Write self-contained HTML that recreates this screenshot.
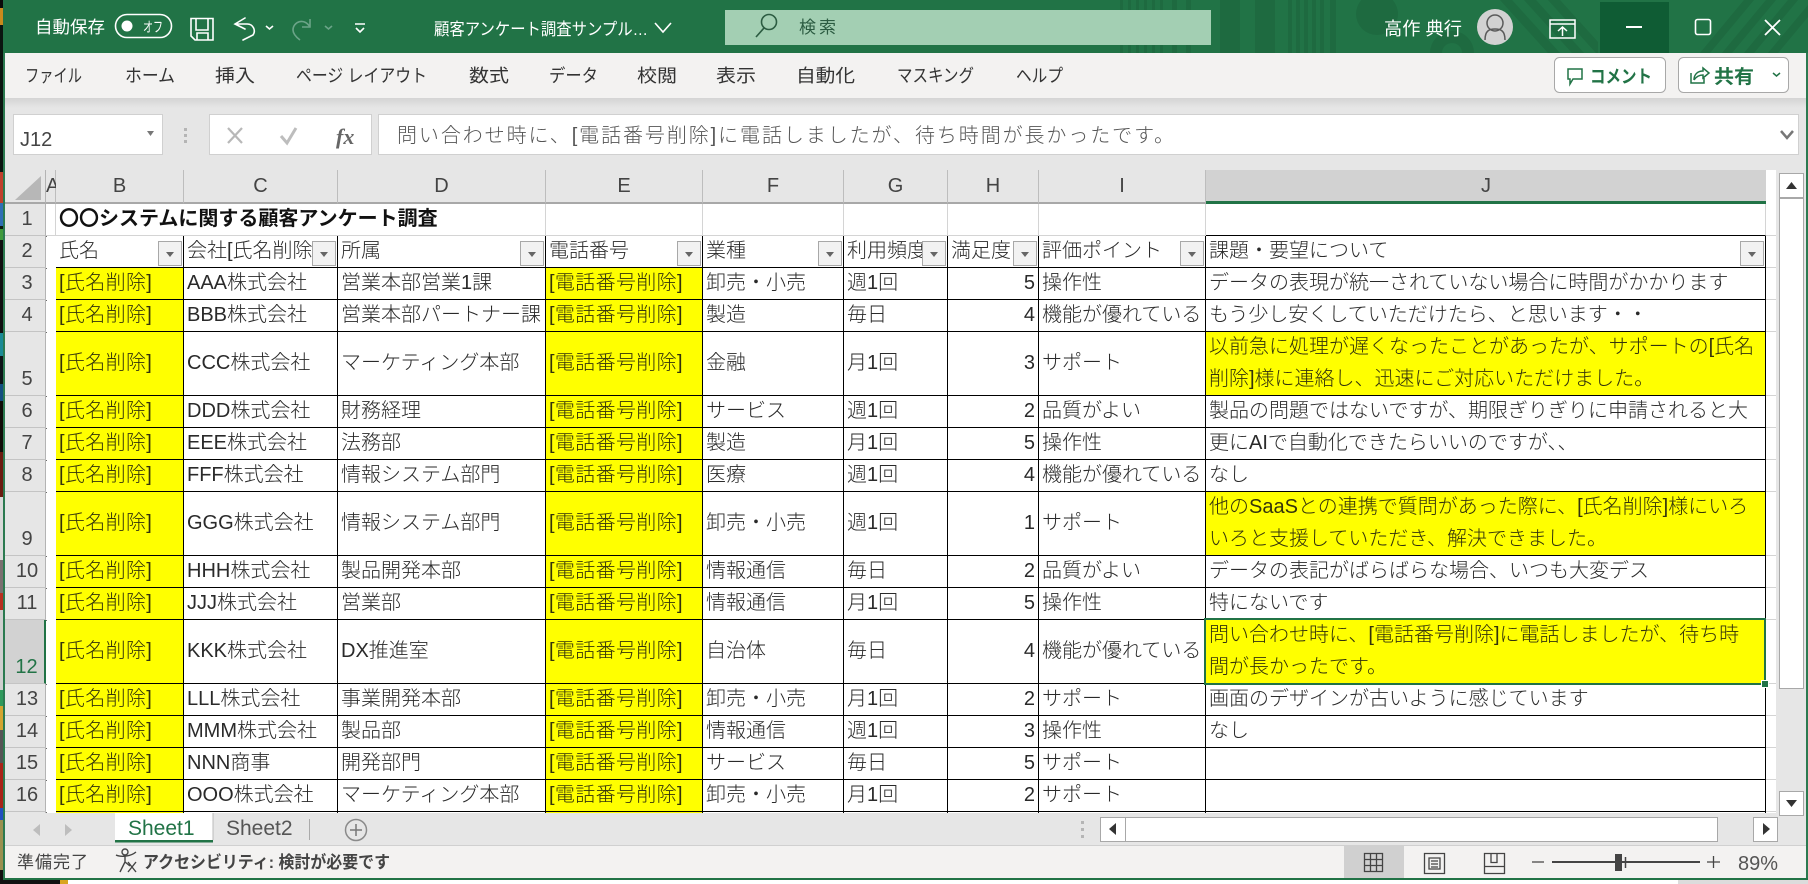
<!DOCTYPE html>
<html lang="ja"><head><meta charset="utf-8"><title>顧客アンケート調査</title>
<style>
html,body{margin:0;padding:0;background:#fff}
body{width:1808px;height:884px;position:relative;overflow:hidden;font-family:"Liberation Sans","Noto Sans CJK JP",sans-serif;color:#2a2a2a}
.a{position:absolute}
#strip{left:0;top:0;width:3px;height:884px;background:linear-gradient(#0a0a0a 0 8px,#c98a1c 8px 25px,#0b1510 25px 172px,#c0402c 172px 203px,#2f6fb5 203px 226px,#0c1a10 226px 229px,#3f9a3c 229px 240px,#101010 240px 333px,#1b8a96 333px 356px,#0d1418 356px 384px,#134f80 384px 401px,#100c08 401px 452px,#6a1c10 452px 497px,#d9d9d9 497px 560px,#7a7070 560px 593px,#b83020 593px 610px,#cfcfcf 610px 690px,#2f9a5c 690px 706px,#d2a530 706px 730px,#555 730px 763px,#a82418 763px 808px,#2050c0 808px 820px,#9a9050 820px 870px,#111 870px)}
#edge{left:3px;top:0;width:2px;height:880px;background:#2b7a50}
#edger{left:1806px;top:0;width:2px;height:880px;background:#2b7a50}
#title{left:3px;top:0;width:1805px;height:53px;background:#217346}
#rib{left:5px;top:53px;width:1801px;height:45px;background:#f3f2f1}
#fbar{left:5px;top:98px;width:1801px;height:72px;background:linear-gradient(#d4d4d4,#e6e6e6 10px)}
.box{background:#fff;border:1px solid #d0d0d0;box-sizing:border-box}
#wrap{left:5px;top:170px;width:1771px;height:643px;overflow:hidden;background:#fff}
#side{left:1776px;top:170px;width:30px;height:643px;background:#e6e6e6}
table{border-collapse:separate;border-spacing:0;table-layout:fixed;width:1771px;font-size:20px;line-height:31px;font-weight:300}
td,th{padding:0 3px 0 3px;white-space:nowrap;overflow:hidden;box-sizing:border-box;border-right:1px solid #000;border-bottom:1px solid #000;vertical-align:middle;position:relative;font-weight:300;text-align:left}
thead th{background:#e6e6e6;border-right:1px solid #bdbdbd;border-bottom:2px solid #a8a8a8;text-align:center;color:#444;padding:0;height:34px;line-height:30px}
thead th.j{background:#d2d2d2;border-bottom:3px solid #217346;border-right:0}
td.r,thead th.c{background:#e6e6e6;border-right:1px solid #b4b4b4;border-bottom:1px solid #c4c4c4;text-align:center;color:#444;padding:0 0 0 4px;vertical-align:bottom;line-height:31px}
td.s{background:#d2d2d2;color:#217346;border-right:2px solid #217346}
td.g{border-right:1px solid #d4d4d4;border-bottom:1px solid #d4d4d4;padding:0}
td.a{border-bottom:1px solid #d4d4d4;padding:0}
td.k{border-right:0;border-bottom:1px solid #d4d4d4;padding:0}
td.y{background:#ff0;color:#33330c;letter-spacing:.35px}
td.w{line-height:31.5px;letter-spacing:0}
td.n{text-align:right;padding-right:3px}
tr.t td.c{border-bottom:1px solid #d4d4d4}
.f{position:absolute;right:1px;top:5px;width:24px;height:25px;box-sizing:border-box;background:#f2f2f2;border:1px solid #a8a8a8}
.f:after{content:"";position:absolute;left:7px;top:10px;border:4.5px solid transparent;border-top:5px solid #666;border-bottom:0}
#sel{left:1204px;top:618px;width:562px;height:67px;box-sizing:border-box;border:2.5px solid #217346}
#hd{left:1761px;top:680px;width:6px;height:6px;background:#217346;border:1px solid #fff}
#tabs{left:5px;top:813px;width:1801px;height:32px;background:#e6e6e6}
#st{left:5px;top:845px;width:1801px;height:33px;background:#f3f2f1;border-top:1px solid #d0d0d0;box-sizing:border-box}
#grn{left:3px;top:878px;width:1805px;height:2px;background:#217346}
#bot{left:0;top:880px;width:1808px;height:4px;background:#fff;overflow:hidden}
svg{position:absolute;left:0;top:0}
svg text{font-family:"Liberation Sans","Noto Sans CJK JP",sans-serif}
</style></head><body>
<div class="a" id="strip"></div><div class="a" id="edge"></div><div class="a" id="edger"></div>
<div class="a" id="title"></div><div class="a" id="rib"></div><div class="a" id="fbar"></div>
<div class="a box" style="left:13px;top:114px;width:150px;height:41px"></div>
<div class="a box" style="left:209px;top:114px;width:163px;height:41px"></div>
<div class="a box" style="left:378px;top:114px;width:1421px;height:41px"></div>
<div class="a" id="wrap">
<table>
<colgroup><col style="width:41px"><col style="width:10px"><col style="width:128px"><col style="width:154px"><col style="width:208px"><col style="width:157px"><col style="width:141px"><col style="width:104px"><col style="width:91px"><col style="width:167px"><col style="width:560px"><col style="width:10px"></colgroup>
<thead><tr><th class="c" style="border-bottom:2px solid #a8a8a8"></th><th style="overflow:visible">A</th><th>B</th><th>C</th><th>D</th><th>E</th><th>F</th><th>G</th><th>H</th><th>I</th><th class="j">J</th><th style="background:#fff;border:0"></th></tr></thead>
<tbody>
<tr class="t" style="height:32px"><td class="r">1</td><td class="g"></td><td class="c" style="overflow:visible;border-right:0;font-weight:700;color:#111">〇〇システムに関する顧客アンケート調査</td><td class="g" style="border-right:0"></td><td class="g"></td><td class="g"></td><td class="g"></td><td class="g"></td><td class="g"></td><td class="g"></td><td class="g" style="border-bottom:1px solid #000"></td><td class="k"></td></tr>
<tr style="height:32px"><td class="r">2</td><td class="a"></td><td>氏名<i class="f"></i></td><td>会社[氏名削除<i class="f"></i></td><td>所属<i class="f"></i></td><td>電話番号<i class="f"></i></td><td>業種<i class="f"></i></td><td>利用頻度<i class="f"></i></td><td>満足度<i class="f"></i></td><td>評価ポイント<i class="f"></i></td><td>課題・要望について<i class="f"></i></td><td class="k"></td></tr>
<tr style="height:32px"><td class="r">3</td><td class="a"></td><td class="y">[氏名削除]</td><td>AAA株式会社</td><td>営業本部営業1課</td><td class="y">[電話番号削除]</td><td>卸売・小売</td><td>週1回</td><td class="n">5</td><td>操作性</td><td>データの表現が統一されていない場合に時間がかかります</td><td class="k"></td></tr>
<tr style="height:32px"><td class="r">4</td><td class="a"></td><td class="y">[氏名削除]</td><td>BBB株式会社</td><td>営業本部パートナー課</td><td class="y">[電話番号削除]</td><td>製造</td><td>毎日</td><td class="n">4</td><td>機能が優れている</td><td>もう少し安くしていただけたら、と思います・・</td><td class="k"></td></tr>
<tr style="height:64px"><td class="r">5</td><td class="a"></td><td class="y">[氏名削除]</td><td>CCC株式会社</td><td>マーケティング本部</td><td class="y">[電話番号削除]</td><td>金融</td><td>月1回</td><td class="n">3</td><td>サポート</td><td class="y w">以前急に処理が遅くなったことがあったが、サポートの[氏名<br>削除]様に連絡し、迅速にご対応いただけました。</td><td class="k"></td></tr>
<tr style="height:32px"><td class="r">6</td><td class="a"></td><td class="y">[氏名削除]</td><td>DDD株式会社</td><td>財務経理</td><td class="y">[電話番号削除]</td><td>サービス</td><td>週1回</td><td class="n">2</td><td>品質がよい</td><td>製品の問題ではないですが、期限ぎりぎりに申請されると大</td><td class="k"></td></tr>
<tr style="height:32px"><td class="r">7</td><td class="a"></td><td class="y">[氏名削除]</td><td>EEE株式会社</td><td>法務部</td><td class="y">[電話番号削除]</td><td>製造</td><td>月1回</td><td class="n">5</td><td>操作性</td><td>更にAIで自動化できたらいいのですが、、</td><td class="k"></td></tr>
<tr style="height:32px"><td class="r">8</td><td class="a"></td><td class="y">[氏名削除]</td><td>FFF株式会社</td><td>情報システム部門</td><td class="y">[電話番号削除]</td><td>医療</td><td>週1回</td><td class="n">4</td><td>機能が優れている</td><td>なし</td><td class="k"></td></tr>
<tr style="height:64px"><td class="r">9</td><td class="a"></td><td class="y">[氏名削除]</td><td>GGG株式会社</td><td>情報システム部門</td><td class="y">[電話番号削除]</td><td>卸売・小売</td><td>週1回</td><td class="n">1</td><td>サポート</td><td class="y w">他のSaaSとの連携で質問があった際に、[氏名削除]様にいろ<br>いろと支援していただき、解決できました。</td><td class="k"></td></tr>
<tr style="height:32px"><td class="r">10</td><td class="a"></td><td class="y">[氏名削除]</td><td>HHH株式会社</td><td>製品開発本部</td><td class="y">[電話番号削除]</td><td>情報通信</td><td>毎日</td><td class="n">2</td><td>品質がよい</td><td>データの表記がばらばらな場合、いつも大変デス</td><td class="k"></td></tr>
<tr style="height:32px"><td class="r">11</td><td class="a"></td><td class="y">[氏名削除]</td><td>JJJ株式会社</td><td>営業部</td><td class="y">[電話番号削除]</td><td>情報通信</td><td>月1回</td><td class="n">5</td><td>操作性</td><td>特にないです</td><td class="k"></td></tr>
<tr style="height:64px"><td class="r s">12</td><td class="a"></td><td class="y">[氏名削除]</td><td>KKK株式会社</td><td>DX推進室</td><td class="y">[電話番号削除]</td><td>自治体</td><td>毎日</td><td class="n">4</td><td>機能が優れている</td><td class="y w">問い合わせ時に、[電話番号削除]に電話しましたが、待ち時<br>間が長かったです。</td><td class="k"></td></tr>
<tr style="height:32px"><td class="r">13</td><td class="a"></td><td class="y">[氏名削除]</td><td>LLL株式会社</td><td>事業開発本部</td><td class="y">[電話番号削除]</td><td>卸売・小売</td><td>月1回</td><td class="n">2</td><td>サポート</td><td>画面のデザインが古いように感じています</td><td class="k"></td></tr>
<tr style="height:32px"><td class="r">14</td><td class="a"></td><td class="y">[氏名削除]</td><td>MMM株式会社</td><td>製品部</td><td class="y">[電話番号削除]</td><td>情報通信</td><td>週1回</td><td class="n">3</td><td>操作性</td><td>なし</td><td class="k"></td></tr>
<tr style="height:32px"><td class="r">15</td><td class="a"></td><td class="y">[氏名削除]</td><td>NNN商事</td><td>開発部門</td><td class="y">[電話番号削除]</td><td>サービス</td><td>毎日</td><td class="n">5</td><td>サポート</td><td></td><td class="k"></td></tr>
<tr style="height:32px"><td class="r">16</td><td class="a"></td><td class="y">[氏名削除]</td><td>OOO株式会社</td><td>マーケティング本部</td><td class="y">[電話番号削除]</td><td>卸売・小売</td><td>月1回</td><td class="n">2</td><td>サポート</td><td></td><td class="k"></td></tr>
<tr style="height:32px"><td class="r"></td><td class="a"></td><td class="y"></td><td></td><td></td><td class="y"></td><td></td><td></td><td></td><td></td><td></td><td class="k"></td></tr>
</tbody></table></div>
<div class="a" id="side"></div>
<div class="a" id="sel"></div><div class="a" id="hd"></div>
<div class="a" id="tabs"></div><div class="a" id="st"></div><div class="a" id="grn"></div>
<div class="a" id="bot"><div class="a" style="left:0;top:0;width:60px;height:4px;background:#111"></div><div class="a" style="left:60px;top:0;width:8px;height:4px;background:#d9a520"></div><div class="a" style="left:1678px;top:0;width:130px;height:4px;background:#dcdcdc"></div></div>

<svg width="1808" height="884" viewBox="0 0 1808 884">
<g fill="#1e6a40">
<path d="M1120 0h3v53h-3zM1128 0h3v53h-3zM1136 0h3v53h-3zM1144 0h3v53h-3zM1152 0h3v53h-3zM1160 0h3v53h-3zM1172 0h5v53h-5zM1186 0h5v53h-5zM1220 0h20v53h-20zM1255 0h20v53h-20zM1288 0h4v53h-4zM1296 0h4v53h-4zM1304 0h4v53h-4zM1312 0h4v53h-4zM1320 0h4v53h-4zM1330 0h6v53h-6z"/>
<circle cx="1377" cy="14" r="21"/>
<path d="M1500 0h12l48 53h-12zM1524 0h12l48 53h-12zM1548 0h12l38 42v11h-2zM1700 53l44-53h10l-44 53zM1722 53l44-53h10l-44 53zM1744 53l44-53h10l-44 53zM1768 53l40-48v12l-30 36z"/>
<path d="M1430 53a22 22 0 0 1 44 0h-12a10 10 0 0 0-20 0z"/>
</g>
<rect x="1600" y="2" width="69" height="51" fill="#0f5c34"/>
<rect x="725" y="10" width="486" height="35" fill="#a3cfb3"/>
<g fill="#fff" font-size="17">
<text x="35" y="33" textLength="70" lengthAdjust="spacingAndGlyphs">自動保存</text>
<text x="143" y="32" font-size="14" textLength="20" lengthAdjust="spacingAndGlyphs">オフ</text>
<text x="434" y="35" textLength="214" lengthAdjust="spacingAndGlyphs">顧客アンケート調査サンプル…</text>
<text x="1384" y="35" font-size="18" textLength="78" lengthAdjust="spacingAndGlyphs">高作 典行</text>
</g>
<text x="799" y="33" font-size="17" fill="#2c5c42" textLength="37">検索</text>
<g fill="none" stroke="#fff" stroke-width="1.6">
<rect x="115.5" y="14.5" width="56" height="23" rx="11.5"/>
<path d="M191 18.5h22v21.5h-18l-4-4zM196 19v11h12V19M197 40v-7h11v7"/>
<path d="M245 18l-10 6 10 5M236 24h11a7 7 0 0 1 6 11l-10 5" stroke-linecap="round"/>
<path d="M266 26l3.500 3 3.500-3"/>
<path d="M355 24h10M356 28l4 4 4-4"/>
<path d="M655 23l8 9 8-9"/>
<path d="M1550 20h25v18h-25zM1550 24h25M1562.500 36v-9M1558 31l4.500-4 4.500 4" stroke-width="1.500"/>
<path d="M1626 27h16" stroke-width="2"/>
<rect x="1695.500" y="19.500" width="15" height="15" rx="2"/>
<path d="M1765 20l15 15M1780 20l-15 15" stroke-width="1.800"/>
</g>
<circle cx="127" cy="26" r="5.500" fill="#fff"/>
<g fill="none" stroke="#6ba488" stroke-width="1.600"><path d="M310 19v8h-8M310 27c-6-10-17-5-17 3 0 4 3 7 7 10"/><path d="M325 26l3.500 3 3.500-3"/></g>
<g fill="none" stroke="#2c5c42" stroke-width="1.600"><circle cx="769" cy="22" r="7.500"/><path d="M764 28l-8 9"/></g>
<circle cx="1495" cy="27" r="18" fill="#d2d2d2"/>
<g fill="none" stroke="#5a5a5a" stroke-width="1.500"><circle cx="1495" cy="23" r="8"/><path d="M1485 40c0-10 5-11 10-11s10 1 10 11"/></g>
<g font-size="18" fill="#333">
<text x="25" y="82" textLength="57" lengthAdjust="spacingAndGlyphs">ファイル</text>
<text x="125" y="82" textLength="50" lengthAdjust="spacingAndGlyphs">ホーム</text>
<text x="215" y="82" textLength="40" lengthAdjust="spacingAndGlyphs">挿入</text>
<text x="296" y="82" textLength="131" lengthAdjust="spacingAndGlyphs">ページ レイアウト</text>
<text x="469" y="82" textLength="40" lengthAdjust="spacingAndGlyphs">数式</text>
<text x="549" y="82" textLength="49" lengthAdjust="spacingAndGlyphs">データ</text>
<text x="637" y="82" textLength="40" lengthAdjust="spacingAndGlyphs">校閲</text>
<text x="716" y="82" textLength="40" lengthAdjust="spacingAndGlyphs">表示</text>
<text x="796" y="82" textLength="59" lengthAdjust="spacingAndGlyphs">自動化</text>
<text x="897" y="82" textLength="77" lengthAdjust="spacingAndGlyphs">マスキング</text>
<text x="1016" y="82" textLength="47" lengthAdjust="spacingAndGlyphs">ヘルプ</text>
</g>
<rect x="1554.500" y="57.500" width="111" height="35" rx="5" fill="#fff" stroke="#a8a8a8"/>
<rect x="1678.500" y="57.500" width="110" height="35" rx="5" fill="#fff" stroke="#a8a8a8"/>
<g fill="none" stroke="#217346" stroke-width="1.500">
<path d="M1568 69h14v10h-9l-3 5v-5h-2z"/>
<path d="M1691 73v10h13v-5M1694 80c0-6 4-9 9-9v-3l6 5-6 5v-3c-4 0-7 2-9 5"/>
</g>
<text x="1590" y="83" font-size="18" font-weight="700" fill="#217346" textLength="62" lengthAdjust="spacingAndGlyphs">コメント</text>
<text x="1714" y="83" font-size="19" font-weight="700" fill="#217346" textLength="40" lengthAdjust="spacingAndGlyphs">共有</text>
<path d="M1773 73l3.500 3 3.500-3" fill="none" stroke="#217346" stroke-width="1.500"/>
<text x="20" y="146" font-size="20" fill="#444">J12</text>
<path d="M147 131h7l-3.500 5z" fill="#777"/>
<g fill="#b5b5b5"><rect x="184" y="128" width="3" height="3"/><rect x="184" y="134" width="3" height="3"/><rect x="184" y="140" width="3" height="3"/></g>
<path d="M228 128l14 15M242 128l-14 15" stroke="#b8b8b8" stroke-width="2.200" fill="none"/>
<path d="M281 136l6 7 9-15" stroke="#bdbdbd" stroke-width="3" fill="none"/>
<text x="336" y="144" font-size="22" font-style="italic" font-weight="700" fill="#666" style="font-family:'Liberation Serif',serif">fx</text>
<text x="397" y="142" font-size="20" font-weight="300" fill="#555" textLength="777">問い合わせ時に、[電話番号削除]に電話しましたが、待ち時間が長かったです。</text>
<path d="M1781 131l6 7 6-7" fill="none" stroke="#777" stroke-width="2.500"/>
<path d="M41 176v24H15z" fill="#b7b7b7"/>
<rect x="1779.500" y="173.500" width="24" height="24" fill="#fff" stroke="#a8a8a8"/>
<path d="M1786 189h11l-5.500-7z" fill="#333"/>
<rect x="1779.500" y="198.500" width="24" height="490" fill="#fff" stroke="#a8a8a8"/>
<rect x="1779.500" y="791.500" width="24" height="24" fill="#fff" stroke="#a8a8a8"/>
<path d="M1786 800h11l-5.500 7z" fill="#333"/>
<rect x="115" y="813" width="98" height="29" fill="#fff"/>
<rect x="115" y="840" width="98" height="2.500" fill="#217346"/>
<path d="M213 813v27" stroke="#bbb"/>
<text x="128" y="835" font-size="21" fill="#217346">Sheet1</text>
<text x="226" y="835" font-size="21" fill="#555">Sheet2</text>
<path d="M309.500 819v21" stroke="#aaa"/>
<circle cx="356" cy="830" r="10.500" fill="none" stroke="#8a8a8a" stroke-width="1.500"/>
<path d="M350 830h12M356 824v12" stroke="#777" stroke-width="1.500"/>
<path d="M40 824l-7 6 7 6z" fill="#bdbdbd"/><path d="M65 824l7 6-7 6z" fill="#bdbdbd"/>
<g fill="#b5b5b5"><rect x="1081" y="821" width="3" height="3"/><rect x="1081" y="828" width="3" height="3"/><rect x="1081" y="835" width="3" height="3"/></g>
<rect x="1100.500" y="817.500" width="25" height="24" fill="#fff" stroke="#a8a8a8"/>
<path d="M1116 823v12l-7-6z" fill="#333"/>
<rect x="1125.500" y="817.500" width="592" height="24" fill="#fff" stroke="#a8a8a8"/>
<rect x="1753.500" y="817.500" width="24" height="24" fill="#fff" stroke="#a8a8a8"/>
<path d="M1763 823v12l7-6z" fill="#333"/>
<text x="17" y="868" font-size="17" fill="#444" textLength="71">準備完了</text>
<g fill="none" stroke="#444" stroke-width="1.400"><circle cx="125" cy="852" r="3"/><path d="M116 855c4 2 14 2 20-3M125 856v6l-5 10M125 862l5 4M128 862l8 10M136 862l-8 10"/></g>
<text x="143" y="868" font-size="17" font-weight="700" fill="#444" textLength="247" lengthAdjust="spacingAndGlyphs">アクセシビリティ: 検討が必要です</text>
<rect x="1344" y="846" width="60" height="32" fill="#d0d0d0"/>
<g fill="none" stroke="#444" stroke-width="1.300">
<path d="M1364.500 853.500h18v18h-18zM1370.500 853.500v18M1376.500 853.500v18M1364.500 859.500h18M1364.500 865.500h18"/>
<path d="M1424.500 853.500h20v20h-20zM1429 858h11v11h-11zM1431 861h7M1431 864h7M1431 867h7"/>
<path d="M1484.500 853.500h20v20h-20zM1484.500 866.500h20M1491 853.500v9h6v-9"/>
<path d="M1532 862h12M1707 862h13M1713.500 856v12"/>
</g>
<path d="M1552 862h148" stroke="#444" stroke-width="2"/>
<rect x="1615" y="854" width="7" height="17" fill="#444"/>
<path d="M1625.500 857v11" stroke="#444" stroke-width="1.500"/>
<text x="1738" y="870" font-size="20" fill="#555" textLength="40" lengthAdjust="spacingAndGlyphs">89%</text>
</svg>
</body></html>
